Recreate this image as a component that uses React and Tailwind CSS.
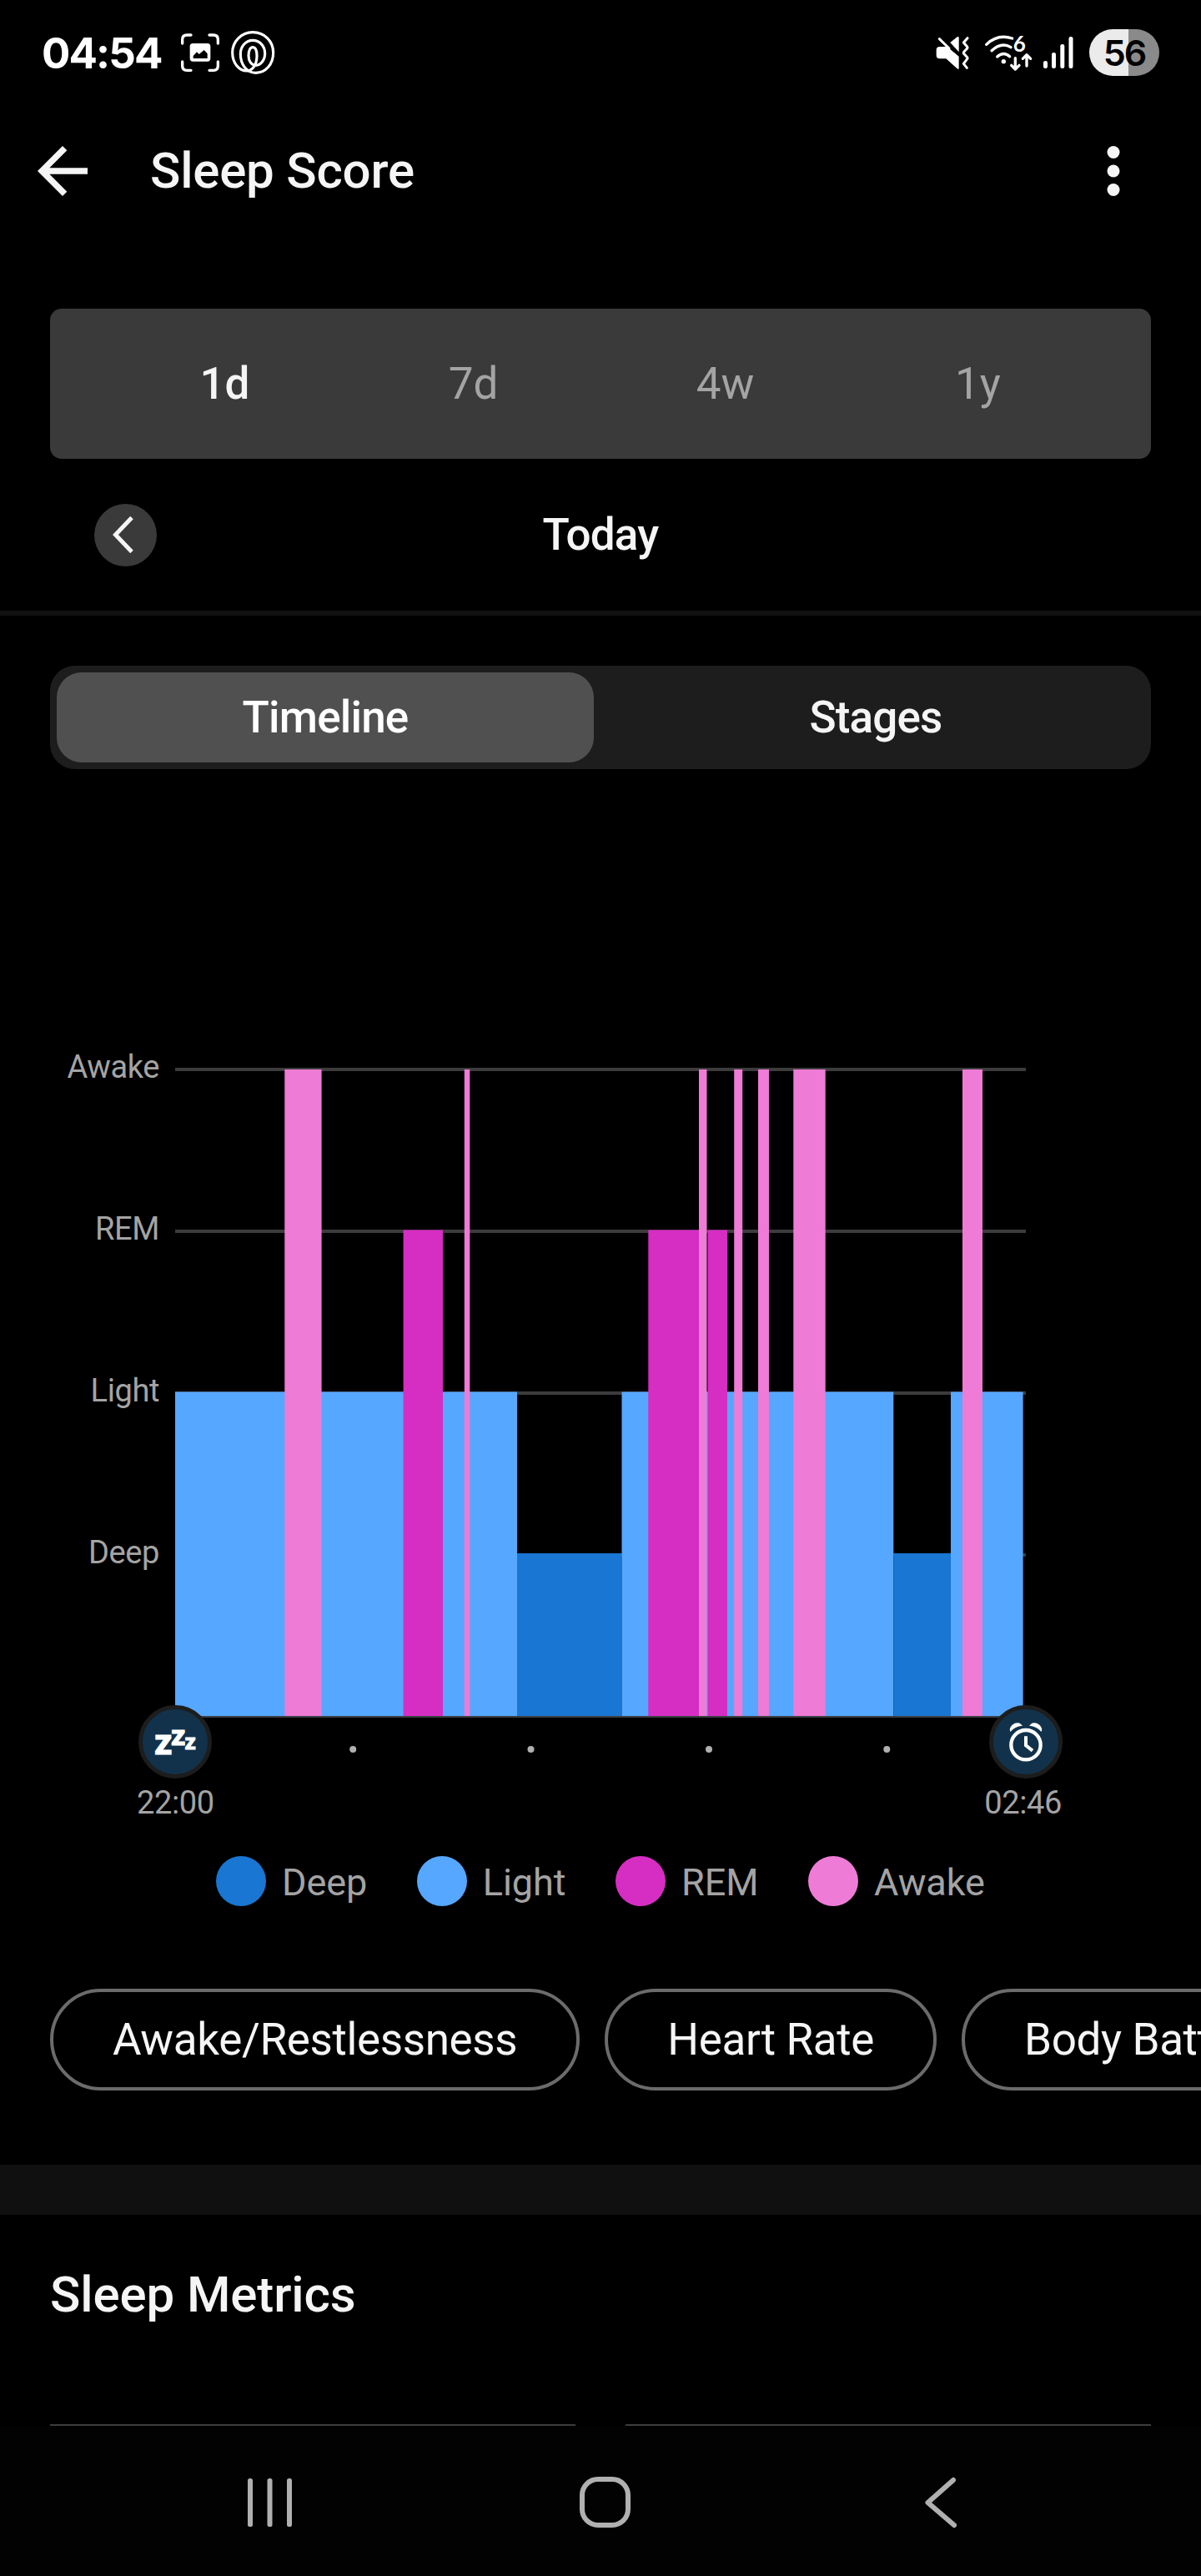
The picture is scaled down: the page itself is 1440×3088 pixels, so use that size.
import { clsx } from "clsx";

const RANGES = ["1d", "7d", "4w", "1y"];

const STAGES = {
  deep: { label: "Deep", color: "#1976d2", top: 680 },
  light: { label: "Light", color: "#56a7ff", top: 486.5 },
  rem: { label: "REM", color: "#d62dc3", top: 292.5 },
  awake: { label: "Awake", color: "#ee7bd6", top: 100 },
};

// x positions on the time axis, 1020 units from fall-asleep to wake-up
const SEGMENTS = [
  { stage: "light", from: 0, to: 410 },
  { stage: "deep", from: 410, to: 535.5 },
  { stage: "light", from: 535.5, to: 861.3 },
  { stage: "deep", from: 861.3, to: 930 },
  { stage: "light", from: 930, to: 1016.6 },
  { stage: "rem", from: 273.6, to: 321 },
  { stage: "rem", from: 567.3, to: 628 },
  { stage: "rem", from: 638.5, to: 662 },
  { stage: "awake", from: 131.3, to: 175.6 },
  { stage: "awake", from: 346.8, to: 353.3 },
  { stage: "awake", from: 628, to: 637.5 },
  { stage: "awake", from: 670.2, to: 680.2 },
  { stage: "awake", from: 699, to: 712 },
  { stage: "awake", from: 741.3, to: 779.7 },
  { stage: "awake", from: 944, to: 968 },
];

const GRID_LINES = [98, 292, 486, 680];
const HOUR_TICKS = [213.2, 426.5, 640, 853.3];
const BASELINE = 875;

function ScreenshotIcon() {
  return (
    <svg className="w-12 h-12" viewBox="649 121 144 144" fill="none">
      <g stroke="#fff" strokeWidth="10" strokeLinecap="round">
        <path d="M657 160V146Q657 130 673 130H688" />
        <path d="M754 130H769Q785 130 785 146V160" />
        <path d="M785 226V241Q785 257 769 257H754" />
        <path d="M688 257H673Q657 257 657 241V226" />
      </g>
      <rect x="684" y="160" width="74" height="65" rx="11" fill="#fff" />
      <path d="M696 214V205L709 191L717 199L735 184L747 197V214Z" fill="#000" />
    </svg>
  );
}

function KnotIcon() {
  return (
    <svg className="w-14 h-14" viewBox="825 108 168 168" fill="none">
      <path
        d="M909 119C952 119 983 152 983 192C983 235 955 265 920 265C885 265 865 232 865 197C865 169 885 148 909 148C934 148 953 169 953 195C953 220 937 238 920 238C904 238 894 222 894 203C894 185 900 173 909 173C919 173 924 186 924 204C924 235 908 258 888 258C860 258 836 230 836 192C836 152 868 119 909 119Z"
        stroke="#fff"
        strokeWidth="9.500"
      />
    </svg>
  );
}

function MuteIcon() {
  return (
    <svg className="w-10 h-[42px]" viewBox="124 126 120 126" fill="none">
      <path d="M137 140L172 174" stroke="#fff" strokeWidth="9" strokeLinecap="round" />
      <path
        d="M138 168H165L207 203V247Q205 250 201 247L161 211H138Q126 211 126 199V180Q126 168 138 168Z"
        fill="#fff"
      />
      <path d="M176 153L201 133Q207 130 207 136V187Z" fill="#fff" />
      <path
        d="M238 137L224 153L237 168Q239 171 237 174L225 187Q223 190 225 193L237 206Q239 209 237 212L224 229L236 244"
        stroke="#fff"
        strokeWidth="9"
        strokeLinecap="round"
        strokeLinejoin="round"
      />
    </svg>
  );
}

function WifiIcon() {
  return (
    <svg className="w-[58px] h-[46px] overflow-visible" viewBox="300 121 174 138" fill="none">
      <g stroke="#fff" strokeWidth="10" strokeLinecap="round" strokeLinejoin="round">
        <path d="M308 161Q348 122 401 139" />
        <path d="M327 183Q363 150 396 171" />
        <path d="M347 205Q370 184 392 204" />
        <path d="M412 210V249M398 236L412 250L426 236" />
        <path d="M453 238V200M439 212L453 198L467 212" />
      </g>
      <circle cx="370" cy="222" r="8" fill="#fff" />
      <text x="404" y="186" fill="#fff" className="font-[Lato] font-bold text-[78px]">
        6
      </text>
    </svg>
  );
}

function SignalIcon() {
  return (
    <svg className="w-[37px] h-10" viewBox="0 0 37 40" fill="#fff">
      <rect x="1" y="30" width="5" height="9" rx="2.3" />
      <rect x="11" y="20" width="5" height="19" rx="2.3" />
      <rect x="21.300" y="10" width="5" height="29" rx="2.3" />
      <rect x="31.500" y="1" width="5" height="38" rx="2.3" />
    </svg>
  );
}

function AlarmIcon() {
  return (
    <svg className="w-12 h-12" viewBox="106 102 144 144" fill="none">
      <circle cx="178" cy="185" r="53" stroke="#fff" strokeWidth="13" />
      <path d="M178 154V187L202 206" stroke="#fff" strokeWidth="12" />
      <path d="M122 138Q117 124 129 113Q142 103 156 107L166 116Q138 119 122 138Z" fill="#fff" />
      <path d="M234 138Q239 124 227 113Q214 103 200 107L190 116Q218 119 234 138Z" fill="#fff" />
    </svg>
  );
}

function StatusBar() {
  return (
    <div className="flex h-[126px] items-center justify-between pl-[50px] pr-[50px]">
      <div className="flex items-center">
        <span className="w-[147px] font-[Inter] text-[51px] leading-none font-bold tracking-[-1.9px] text-white">
          04:54
        </span>
        <div className="ml-[19px] flex items-center gap-[11px]">
          <ScreenshotIcon />
          <KnotIcon />
        </div>
      </div>
      <div className="flex items-center">
        <MuteIcon />
        <div className="ml-[18px]">
          <WifiIcon />
        </div>
        <div className="ml-[12px]">
          <SignalIcon />
        </div>
        <div className="ml-[19px] flex h-14 w-[84px] items-center justify-center rounded-full bg-linear-to-r from-[#ebebeb] from-56% to-[#8a8a8a] to-56% font-[Inter] text-[43px] leading-none font-semibold tracking-[-2px] text-black">
          56
        </div>
      </div>
    </div>
  );
}

function Header() {
  return (
    <header className="flex h-[158px] items-center pl-[30px] pr-[60px] text-[#f5f5f5]">
      <svg className="size-[90px]" viewBox="0 0 24 24" fill="currentColor">
        <path d="M20 11H7.830l5.590-5.590L12 4l-8 8 8 8 1.410-1.410L7.830 13H20v-2z" />
      </svg>
      <h1 className="ml-[60px] flex-1 text-[60px] leading-none font-medium tracking-[-0.2px]">
        Sleep Score
      </h1>
      <svg className="size-[90px]" viewBox="0 0 24 24" fill="currentColor">
        <circle cx="12" cy="6" r="2" />
        <circle cx="12" cy="12" r="2" />
        <circle cx="12" cy="18" r="2" />
      </svg>
    </header>
  );
}

function RangePicker() {
  return (
    <div className="mx-[60px] mt-[86px] grid h-[180px] grid-cols-[301px_295px_309px_297px] items-center rounded-[14px] bg-[#3a3a3a] pl-[59px] text-center text-[53px] leading-none">
      {RANGES.map((range, i) => (
        <button
          key={range}
          className={clsx(i === 0 ? "font-medium text-[#f5f5f5]" : "text-[#a4a4a4]")}
        >
          {range}
        </button>
      ))}
    </div>
  );
}

function DateNav() {
  return (
    <div className="grid h-[182px] grid-cols-3 items-center px-[113px]">
      <button className="flex size-[75px] items-center justify-center rounded-full bg-[#3a3a3a] pr-1">
        <svg className="h-11 w-[30px]" viewBox="0 0 30 44" fill="none">
          <path d="M24 1.500L4.500 22L24 42.500" stroke="#f5f5f5" strokeWidth="5" />
        </svg>
      </button>
      <span className="text-center text-[53px] leading-none font-medium tracking-[-0.8px] text-[#f5f5f5]">
        Today
      </span>
    </div>
  );
}

function ViewToggle() {
  return (
    <div className="mx-[60px] mt-[60px] grid h-[124px] grid-cols-2 rounded-[30px] bg-[#1d1d1d] p-2 text-[53px] leading-none font-medium tracking-[-0.8px]">
      <button className="mr-2 rounded-[30px] bg-[#505050] text-white">Timeline</button>
      <button className="ml-2 text-[#f5f5f5]">Stages</button>
    </div>
  );
}

function SleepChart() {
  return (
    <section className="mt-[260px] text-[38px] leading-none tracking-[-0.4px] text-[#a4a4a4]">
      <div className="flex">
        <div className="w-[210px] shrink-0 pr-[19px] text-right">
          {["awake", "rem", "light", "deep"].map((key) => (
            <div key={key} className="flex h-[194px] items-center justify-end">
              {STAGES[key].label}
            </div>
          ))}
        </div>
        <svg className="block h-[950px] w-[1020px]" viewBox="0 0 1020 950">
          {GRID_LINES.map((y) => (
            <rect key={y} x="0" y={y} width="1020" height="4" fill="#3c3c3c" />
          ))}
          {SEGMENTS.map(({ stage, from, to }) => (
            <rect
              key={`${stage}-${from}`}
              x={from}
              y={STAGES[stage].top}
              width={to - from}
              height={BASELINE - STAGES[stage].top}
              fill={STAGES[stage].color}
            />
          ))}
          <rect x="0" y={BASELINE} width="1020" height="2" fill="#3c4047" />
          {HOUR_TICKS.map((x) => (
            <circle key={x} cx={x} cy="915" r="4" fill="#b0b0b0" />
          ))}
        </svg>
      </div>

      {/* start / end markers sit over the chart's baseline */}
      <div className="relative -mt-[88px] flex w-[1274px] justify-between pl-[166px]">
        <div className="flex size-[88px] items-center justify-center rounded-full border-5 border-[#1d1d1d] bg-[#12324b]">
          <svg className="h-12 w-[52px] overflow-visible" viewBox="184 2064 52 48" fill="#fff">
            <g className="font-[Roboto] font-extrabold tracking-normal" stroke="#fff">
              <text x="185" y="2103" className="text-[42px]">z</text>
              <text x="205" y="2092" className="text-[34px]">z</text>
              <text x="221.500" y="2096.500" className="text-[26px]">z</text>
            </g>
          </svg>
        </div>
        <div className="flex size-[88px] items-center justify-center rounded-full border-5 border-[#1d1d1d] bg-[#12324b]">
          <AlarmIcon />
        </div>
      </div>
      <div className="mt-2.5 flex w-[1273px] justify-between pl-[164px]">
        <span>22:00</span>
        <span>02:46</span>
      </div>

      <div className="mt-[45px] flex h-[60px] items-center justify-center gap-[60px] text-[45px] leading-none tracking-[-0.1px]">
        {Object.values(STAGES).map(({ label, color }) => (
          <div key={label} className="flex items-center gap-[18.75px]">
            <span className="size-[60px] rounded-full" style={{ backgroundColor: color }} />
            <span className="pt-0.5">{label}</span>
          </div>
        ))}
      </div>
    </section>
  );
}

function OverlayChips() {
  return (
    <div className="mt-[99px] flex gap-[30px] overflow-hidden pl-[60px] text-[53px] leading-none tracking-[-0.37px] text-[#f5f5f5]">
      {["Awake/Restlessness", "Heart Rate", "Body Battery"].map((name) => (
        <button
          key={name}
          className="h-[122px] shrink-0 rounded-full border-4 border-[#6b6b6b] px-[71px] whitespace-nowrap"
        >
          {name}
        </button>
      ))}
    </div>
  );
}

function NavBar() {
  return (
    <nav className="flex h-[180px] items-center bg-[#020202] pt-[3px]">
      <svg className="ml-[296px] h-[58px] w-[55px]" viewBox="0 0 55 58" fill="#b0b0b0">
        <rect x="1" y="0" width="6" height="58" rx="2.500" />
        <rect x="24.500" y="0" width="6" height="58" rx="2.500" />
        <rect x="48" y="0" width="6" height="58" rx="2.500" />
      </svg>
      <span className="ml-[344px] size-[61px] rounded-[22px] border-6 border-[#b0b0b0]" />
      <svg className="ml-[351px] h-[62px] w-[42px]" viewBox="0 0 42 62" fill="none">
        <path
          d="M36 4L5.500 31L37 58"
          stroke="#b0b0b0"
          strokeWidth="6"
          strokeLinecap="round"
          strokeLinejoin="round"
        />
      </svg>
    </nav>
  );
}

export default function App() {
  return (
    <div className="flex h-[3088px] w-[1440px] flex-col overflow-hidden bg-black font-[Roboto,sans-serif]">
      <StatusBar />
      <Header />
      <RangePicker />
      <DateNav />
      <div className="h-1.5 bg-[#111111]" />
      <ViewToggle />
      <SleepChart />
      <OverlayChips />
      <div className="mt-[89px] h-[60px] shrink-0 bg-[#101010]" />
      <section className="px-[60px] pt-[66px]">
        <h2 className="text-[60px] leading-none font-medium tracking-[-0.1px] text-[#f5f5f5]">
          Sleep Metrics
        </h2>
        <div className="mt-[125px] grid grid-cols-2 gap-[60px]">
          <div className="h-0.5 bg-[#3c3c3c]" />
          <div className="h-0.5 bg-[#3c3c3c]" />
        </div>
      </section>
      <NavBar />
    </div>
  );
}
